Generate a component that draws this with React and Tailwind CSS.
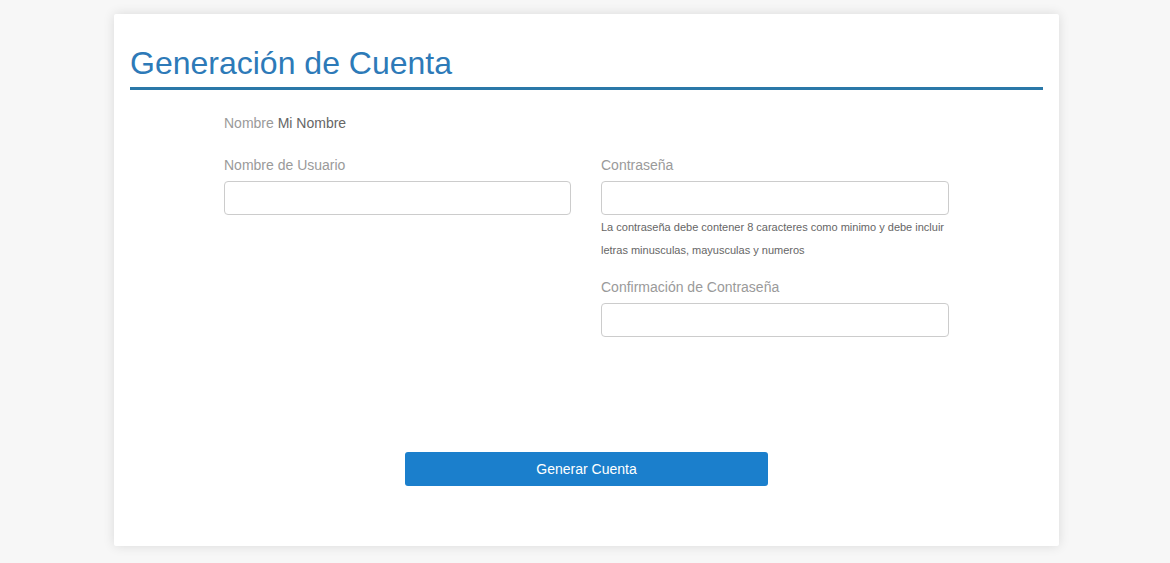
import React from "react";

function Field({ label, children }) {
  return (
    <div>
      <label className="block text-[14px] leading-[20px] text-[#9a9a9a]">{label}</label>
      <input
        type="text"
        className="mt-[6px] block w-full h-[34px] rounded-[4px] border border-[#cccccc] bg-white px-3 outline-none"
      />
      {children}
    </div>
  );
}

export default function App() {
  return (
    <div
      className="min-h-screen bg-[#f7f7f7] pt-[14px] pb-[17px]"
      style={{ fontFamily: '"Liberation Sans", Arial, sans-serif' }}
    >
      <div className="ml-[114px] w-[945px] bg-white rounded-[2px] shadow-[0_0_12px_rgba(0,0,0,0.12)] px-4 pt-[32px] pb-[60px]">
        <h1 className="text-[32px] leading-[35px] text-[#2d7ab8] pb-[6px] border-b-[3px] border-[#2a78a8]">
          Generación de Cuenta
        </h1>

        <div className="w-[725px] mx-auto">
          <p className="mt-[23px] text-[14px] leading-[20px] text-[#9a9a9a]">
            Nombre <span className="text-[#666666]">Mi Nombre</span>
          </p>

          <div className="mt-[22px] grid grid-cols-[347px_348px] gap-x-[30px]">
            <Field label="Nombre de Usuario" />
            <div>
              <Field label="Contraseña">
                <p className="pt-[1px] text-[11px] leading-[23px] text-[#666666]">
                  La contraseña debe contener 8 caracteres como minimo y debe incluir
                  <br />
                  letras minusculas, mayusculas y numeros
                </p>
              </Field>
              <div className="mt-[15px]">
                <Field label="Confirmación de Contraseña" />
              </div>
            </div>
          </div>

          <button
            type="button"
            className="block mx-auto mt-[115px] w-[363px] h-[34px] rounded-[3px] bg-[#1b7fcc] text-white text-[14px]"
          >
            Generar Cuenta
          </button>
        </div>
      </div>
    </div>
  );
}
